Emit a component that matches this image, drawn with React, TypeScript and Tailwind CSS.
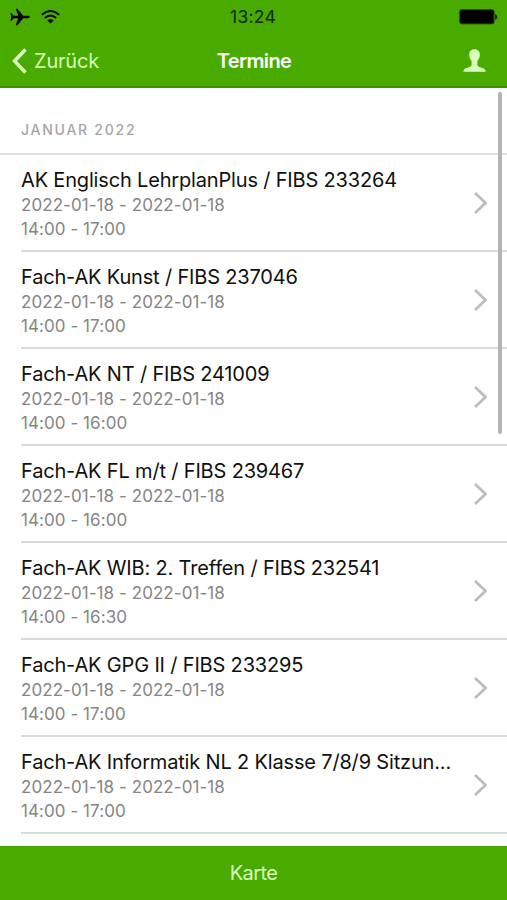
const rows = [
  { title: 'AK Englisch LehrplanPlus / FIBS 233264', end: '17:00' },
  { title: 'Fach-AK Kunst / FIBS 237046', end: '17:00' },
  { title: 'Fach-AK NT / FIBS 241009', end: '16:00' },
  { title: 'Fach-AK FL m/t / FIBS 239467', end: '16:00' },
  { title: 'Fach-AK WIB: 2. Treffen / FIBS 232541', end: '16:30' },
  { title: 'Fach-AK GPG II / FIBS 233295', end: '17:00' },
  { title: 'Fach-AK Informatik NL 2 Klasse 7/8/9 Sitzun...', end: '17:00' },
];

function StatusBar() {
  return (
    <div className="flex h-[34px] items-center justify-between pl-[10px] pr-[9px] text-black">
      <div className="flex w-[60px] items-center gap-[11px]">
        <svg width="20" height="18" viewBox="0 0 20 18" fill="currentColor">
          <path d="M19.8 9c0-.7-1-1.200-2.200-1.200h-4.400L7.400.8H5.700l2.600 7H3.600L1.700 5.300H.4L1.300 9l-.9 3.700h1.300l1.900-2.500h4.700l-2.600 7h1.700l5.800-7h4.400c1.200 0 2.200-.5 2.200-1.200z" />
        </svg>
        <svg width="19" height="14" viewBox="0 0 19 14" fill="none" stroke="currentColor" strokeWidth="2">
          <path d="M.9 4.700Q9.500-2.700 18.100 4.700M3.900 7.900Q9.500 3.200 15.100 7.900" />
          <path d="M6.300 10.300Q9.500 8 12.700 10.300L9.500 13.500Z" fill="currentColor" stroke="none" />
        </svg>
      </div>
      <span className="relative -left-px text-[17.500px] tracking-[0.250px] text-[#102900]">13:24</span>
      <div className="flex w-[60px] justify-end">
        <svg width="39" height="16" viewBox="0 0 39 16">
          <rect x=".6" y=".6" width="34.500" height="14.300" rx="2" fill="#000" stroke="#245800" strokeWidth="1" />
          <path d="M36.200 5v6c1.200-.5 2-1.600 2-3s-.8-2.500-2-3z" fill="#0c2100" />
        </svg>
      </div>
    </div>
  );
}

export default function App() {
  return (
    <div className="relative flex h-[900px] w-[507px] flex-col overflow-hidden bg-white font-['Inter','Liberation_Sans',sans-serif]">
      <header className="h-[88px] shrink-0 border-b-2 border-[#3b9200] bg-[#49aa00]">
        <StatusBar />
        <div className="flex h-[53px] items-center justify-between pl-[12px] pr-[21px]">
          <div className="flex w-[110px] items-center gap-[7px] text-[#d9ffbd]">
            <svg width="15" height="26" viewBox="0 0 15 26" fill="none" stroke="currentColor" strokeWidth="3.500">
              <path d="M13.500 1.500 2.500 13l11 11.500" />
            </svg>
            <span className="text-[20px] tracking-[-0.200px]">Zurück</span>
          </div>
          <h1 className="text-[20px] font-semibold tracking-[-0.650px] text-white">Termine</h1>
          <div className="flex w-[100px] justify-end text-[#d9ffbd]">
            <svg width="23" height="23" viewBox="0 0 23 23" fill="currentColor">
              <path d="M11.500.3c-3.600 0-5.600 2.300-5.300 6 .2 2.500 1.100 4.400 2.400 5.700v3.800c0 1.600-1.700 2.200-4.100 3C2.100 19.600.5 20.300.3 22.700h22.400c-.2-2.400-1.800-3.100-4.200-3.900-2.400-.8-4.100-1.400-4.100-3V12c1.300-1.300 2.200-3.200 2.400-5.700.3-3.700-1.700-6-5.300-6z" />
            </svg>
          </div>
        </div>
      </header>

      <main className="min-h-0 flex-1 overflow-hidden">
        <h2 className="h-[67px] border-b-2 border-[#dedede] pl-[21px] pt-[32px] text-[14px] font-medium leading-[20px] tracking-[1.750px] text-[#a5a5a5]">
          JANUAR 2022
        </h2>
        <ul>
          {rows.map((row) => (
            <li key={row.title} className="ml-[21px] flex h-[97px] items-center justify-between border-b-2 border-[#dadada] pr-[20px]">
              <div className="h-full whitespace-nowrap pt-[12px]">
                <div className="text-[20px] leading-[26px] tracking-[-0.170px] text-[#101010]">{row.title}</div>
                <div className="pt-px text-[17px] leading-[23.500px] tracking-[0.060px] text-[#858585]">2022-01-18 - 2022-01-18</div>
                <div className="text-[17px] leading-[23.500px] tracking-[0.060px] text-[#858585]">14:00 - {row.end}</div>
              </div>
              <svg width="13" height="22" viewBox="0 0 13 22" fill="none" stroke="#bdbdbd" strokeWidth="2.800">
                <path d="M1 1l10.500 10L1 21" />
              </svg>
            </li>
          ))}
        </ul>
      </main>

      <footer className="flex h-[54px] shrink-0 items-center justify-center bg-[#49aa00] text-[20px] tracking-[-0.600px] text-[#d9ffbd]">
        Karte
      </footer>
      <div className="absolute left-[498px] top-[92px] h-[342px] w-[4px] rounded-full bg-[#b4b4b4]" />
    </div>
  );
}
